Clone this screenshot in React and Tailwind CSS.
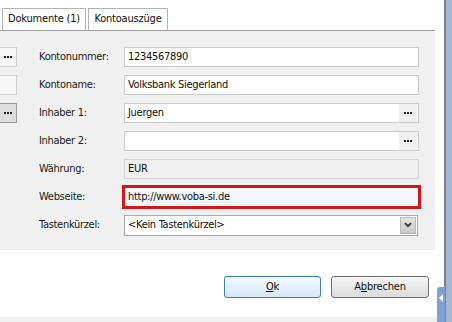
import React from "react";

const font = { fontFamily: '"DejaVu Sans Condensed", "Liberation Sans", Arial, sans-serif' };

function Dots() {
  return (
    <div className="flex gap-[1px]">
      <div className="h-[2px] w-[2px] bg-[#222]" />
      <div className="h-[2px] w-[2px] bg-[#222]" />
      <div className="h-[2px] w-[2px] bg-[#222]" />
    </div>
  );
}

function SideButton({ variant }) {
  if (variant === "dark") {
    return (
      <div className="flex h-5 w-[17px] items-center justify-center border border-l-0 border-[#9a9a9a] bg-[#dedede]">
        <Dots />
      </div>
    );
  }
  return (
    <div className="flex h-5 w-[17px] items-center justify-center border border-l-0 border-[#cfcfcf] bg-[#f7f7f7]">
      {variant === "dots" && <Dots />}
    </div>
  );
}

function Row({ side, label, children }) {
  return (
    <div className="flex h-5 items-center">
      <div className="w-[17px]">{side}</div>
      <div className="ml-[22px] w-[85px] text-[11px] tracking-[-0.3px] text-[#1a1a1a]">{label}</div>
      {children}
    </div>
  );
}

function Field({ value, button, disabled, highlight }) {
  let cls = "border-[#cccccc] bg-white";
  if (disabled) cls = "border-[#d4d4d4] bg-[#f0f0f0]";
  if (highlight) cls = "border-[#d01818] bg-[#f3f6fd] ring-2 ring-[#d01818]";
  return (
    <div className={`flex h-5 w-[295px] items-center justify-between border ${cls}`}>
      <span className="pl-[3px] text-[11px] tracking-[-0.3px] text-[#111]">{value}</span>
      {button && (
        <div className="mr-[1px] flex h-[18px] w-[18px] items-center justify-center bg-[#f0f0f0]">
          <Dots />
        </div>
      )}
    </div>
  );
}

export default function App() {
  return (
    <div className="relative flex h-[322px] w-[452px] overflow-hidden bg-white" style={font}>
      <div className="flex w-[444px] flex-col">
        <div className="h-2" />
        {/* tabs */}
        <div className="flex h-[22px] items-stretch pl-[2px] text-[11px] tracking-[-0.2px] text-[#111]">
          <div className="flex w-[84px] items-center justify-center border border-b-0 border-[#b4b4b4] bg-white">
            Dokumente (1)
          </div>
          <div className="ml-[2px] flex w-[80px] items-center justify-center border border-b-0 border-[#b4b4b4] bg-white">
            Kontoauszüge
          </div>
        </div>
        {/* panel */}
        <div className="flex h-[220px] w-[435px] flex-col gap-2 border-t border-[#a0a0a0] bg-[#f0f0f0] pt-4">
          <Row side={<SideButton variant="dots" />} label="Kontonummer:">
            <Field value="1234567890" />
          </Row>
          <Row side={<SideButton variant="empty" />} label="Kontoname:">
            <Field value="Volksbank Siegerland" />
          </Row>
          <Row side={<SideButton variant="dark" />} label="Inhaber 1:">
            <Field value="Juergen" button />
          </Row>
          <Row label="Inhaber 2:">
            <Field value="" button />
          </Row>
          <Row label="Währung:">
            <Field value="EUR" disabled />
          </Row>
          <Row label="Webseite:">
            <Field value="http://www.voba-si.de" highlight />
          </Row>
          <Row label="Tastenkürzel:">
            <div className="flex h-[21px] w-[294px] items-center justify-between border border-[#a8a8a8] bg-white">
              <span className="pl-[3px] text-[11px] tracking-[-0.3px] text-[#111]">&lt;Kein Tastenkürzel&gt;</span>
              <div className="mr-[1px] flex h-[17px] w-[16px] items-center justify-center border border-[#b8b8b8] bg-gradient-to-b from-[#e4e4e4] to-[#c8c8c8]">
                <svg width="8" height="6" viewBox="0 0 8 6">
                  <path d="M1 1.2 L4 4.2 L7 1.2" fill="none" stroke="#333" strokeWidth="1.8" />
                </svg>
              </div>
            </div>
          </Row>
        </div>
        {/* buttons */}
        <div className="flex justify-end gap-[10px] pr-[15px] pt-[26px] text-[11px] tracking-[-0.2px] text-[#111]">
          <div className="flex h-[22px] w-[97px] items-center justify-center rounded-[3px] border border-[#3c7fb1] bg-gradient-to-b from-[#f4f9fe] to-[#d6e6f6]">
            <span><span className="underline">O</span>k</span>
          </div>
          <div className="flex h-[22px] w-[98px] items-center justify-center rounded-[3px] border border-[#707070] bg-gradient-to-b from-[#f6f6f6] to-[#dcdcdc]">
            <span>A<span className="underline">b</span>brechen</span>
          </div>
        </div>
        <div className="flex-1" />
        <div className="h-[5px] w-[437px] bg-[#f0f0f0]" />
      </div>
      {/* window edge */}
      <div className="w-[2px] bg-[#7a838e]" />
      <div className="w-[6px] bg-[#a3b7d3]" />
      <div className="absolute left-[437px] top-[287px] flex h-[40px] w-[8px] items-start rounded-l-[3px] bg-[#7fa1d6] pt-[7px]">
        <div className="ml-[2px] h-0 w-0 border-y-[4px] border-r-[4px] border-y-transparent border-r-white" />
      </div>
    </div>
  );
}
